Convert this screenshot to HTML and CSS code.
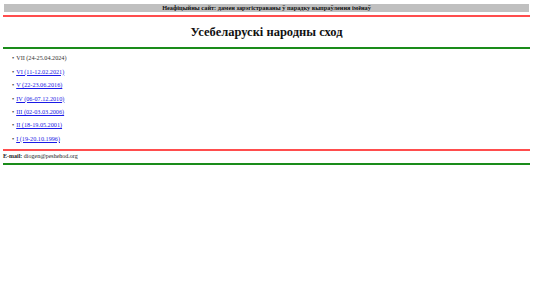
FILE: index.html
```html
<!DOCTYPE html>
<html lang="be">
<head>
<meta charset="utf-8">
<title>Усебеларускі народны сход</title>
<link rel="stylesheet" href="styles.css">
</head>
<body>
<div class="page">
  <div class="notice">Неафіцыйны сайт: дамен зарэгістраваны ў парадку выпраўлення імёнаў</div>
  <div class="rule red"></div>
  <h1 class="title">Усебеларускі народны сход</h1>
  <div class="rule green"></div>
  <ul class="list">
    <li>VII (24-25.04.2024)</li>
    <li><a href="#">VI (11-12.02.2021)</a></li>
    <li><a href="#">V (22-23.06.2016)</a></li>
    <li><a href="#">IV (06-07.12.2010)</a></li>
    <li><a href="#">III (02-03.03.2006)</a></li>
    <li><a href="#">II (18-19.05.2001)</a></li>
    <li><a href="#">I (19-20.10.1996)</a></li>
  </ul>
  <div class="rule red"></div>
  <p class="contact"><b>E-mail:</b> diogen@peshehod.org</p>
  <div class="rule green"></div>
</div>
</body>
</html>
```
FILE: styles.css
```css
html, body {
  margin: 0;
  padding: 0;
  background: #fff;
}
.page {
  padding: 4px 3px 0 3px;
  font-family: "Liberation Serif", "Times New Roman", serif;
  color: #222;
}
.notice {
  margin: 0 1px;
  background: #c0c0c0;
  font-size: 6.3px;
  font-weight: bold;
  text-align: center;
  line-height: 7.5px;
  color: #111;
}
.rule {
  height: 2px;
}
.rule.red {
  background: #ff4d4d;
}
.notice + .rule.red {
  margin-top: 3.5px;
}
.rule.green {
  background: #1a8c1a;
}
.title {
  margin: 0;
  padding: 8px 0 8px 0;
  font-size: 12.5px;
  line-height: 14px;
  text-align: center;
  font-weight: bold;
  color: #111;
}
.list {
  list-style: none;
  margin: 0;
  padding: 2.3px 0 3.8px 9px;
  font-size: 6.2px;
  line-height: 13.4px;
  color: #333;
}
.list li::before {
  content: "\2022";
  margin-right: 2px;
}
.list a {
  color: #1a1ae6;
}
.contact {
  margin: 0;
  padding: 1.5px 0 2px 0;
  font-size: 6px;
  line-height: 9px;
}
```
